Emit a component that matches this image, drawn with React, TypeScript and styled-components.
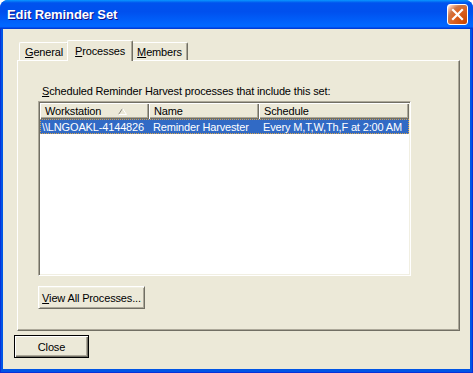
import styled, { createGlobalStyle } from 'styled-components';

const GlobalStyle = createGlobalStyle`
  html, body {
    margin: 0;
    padding: 0;
    background: #ffffff;
  }
  body {
    font-family: "Liberation Sans", Arial, sans-serif;
    font-size: 11px;
    letter-spacing: -0.15px;
    color: #000;
  }
  * {
    box-sizing: border-box;
  }
`;

const Window = styled.div`
  width: 473px;
  height: 373px;
  display: flex;
  flex-direction: column;
  background: #0054e3;
  border-radius: 8px 8px 0 0;
  overflow: hidden;
`;

const TitleBar = styled.div`
  height: 29px;
  flex-shrink: 0;
  display: flex;
  align-items: center;
  justify-content: space-between;
  padding: 0 5px 0 7px;
  background: linear-gradient(
    180deg,
    #0997ff 0%,
    #0053ee 10%,
    #0050ee 40%,
    #0066ff 86%,
    #0066ff 92%,
    #005bff 94%,
    #003dd7 96%,
    #003dd7 100%
  );
`;

const Title = styled.span`
  font-family: "Liberation Sans", Arial, sans-serif;
  font-weight: bold;
  font-size: 13px;
  color: #fff;
  text-shadow: 1px 1px 0 #0f1089;
  letter-spacing: -0.1px;
`;

const CloseBox = styled.div`
  width: 21px;
  height: 21px;
  border: 1px solid #fff;
  border-radius: 3px;
  display: flex;
  align-items: center;
  justify-content: center;
  background: radial-gradient(
    circle at 90% 90%,
    #cc4600 0%,
    #dc6527 55%,
    #cd7546 70%,
    #ffccb2 90%,
    #ffffff 100%
  );
`;

const Frame = styled.div`
  flex: 1;
  display: flex;
  padding: 0 3px 4px 3px;
  background: #0055e5;
  box-shadow: inset 1px 0 0 #0831d9, inset -1px 0 0 #0831d9, inset 0 -1px 0 #0831d9;
`;

const Client = styled.div`
  flex: 1;
  display: flex;
  flex-direction: column;
  background: #ece9d8;
  padding: 11px 0 11px 0;
`;

const TabControl = styled.div`
  margin-left: 14px;
  width: 443px;
  flex: 1;
  display: flex;
  flex-direction: column;
`;

const TabStrip = styled.div`
  height: 20px;
  display: flex;
  align-items: flex-end;
  padding-left: 2px;
  position: relative;
  z-index: 1;
`;

const Tab = styled.div<{ $active?: boolean }>`
  position: relative;
  z-index: ${p => (p.$active ? 2 : 1)};
  height: ${p => (p.$active ? 21 : 18)}px;
  margin: 0 ${p => (p.$active ? -2 : 0)}px ${p => (p.$active ? -1 : 0)}px;
  padding: 0 ${p => (p.$active ? 7 : 5)}px ${p => (p.$active ? 1 : 0)}px;
  display: flex;
  align-items: center;
  background: #ece9d8;
  border-top: 1px solid #fff;
  border-left: 1px solid #fff;
  border-right: 1px solid #716f64;
  box-shadow: inset -1px 0 0 #aca899;
  border-radius: 2px 2px 0 0;
  white-space: nowrap;
`;

const Panel = styled.div`
  flex: 1;
  display: flex;
  flex-direction: column;
  align-items: flex-start;
  background: #ece9d8;
  border-top: 1px solid #fff;
  border-left: 1px solid #fff;
  border-right: 1px solid #716f64;
  border-bottom: 1px solid #716f64;
  box-shadow: inset -1px -1px 0 #aca899;
  padding: 24px 0 0 20px;
`;

const Label = styled.div`
  height: 13px;
  line-height: 13px;
  padding-left: 4px;
  margin-bottom: 3px;
  white-space: nowrap;
`;

const ListView = styled.div`
  width: 373px;
  height: 175px;
  background: #fff;
  border: 1px solid;
  border-color: #aca899 #fff #fff #aca899;
  box-shadow: inset 1px 1px 0 #716f64, inset -1px -1px 0 #f1efe2;
  padding: 1px;
`;

const HeaderRow = styled.div`
  display: grid;
  grid-template-columns: 109px 110px 150px;
  height: 16px;
`;

const HeaderCell = styled.div`
  display: flex;
  align-items: center;
  padding-left: 5px;
  background: #ece9d8;
  box-shadow: inset 1px 1px 0 #fff, inset -1px -1px 0 #716f64, inset -2px -2px 0 #aca899;
  white-space: nowrap;
`;

const SortArrow = styled.svg`
  margin-left: auto;
  margin-right: 22px;
  display: block;
`;

const DataRow = styled.div<{ $selected?: boolean }>`
  display: grid;
  grid-template-columns: 109px 110px 150px;
  height: 15px;
  background: ${p => (p.$selected ? '#316ac5' : 'transparent')};
  color: ${p => (p.$selected ? '#fff' : '#000')};
  border: 1px dotted ${p => (p.$selected ? '#d8a24a' : 'transparent')};
`;

const DataCell = styled.div<{ $first?: boolean }>`
  display: flex;
  align-items: center;
  padding-left: ${p => (p.$first ? 1 : 3)}px;
  white-space: nowrap;
  overflow: hidden;
`;

const Button = styled.button<{ $default?: boolean; $width: number }>`
  width: ${p => p.$width}px;
  height: 23px;
  padding: 0;
  font-family: "Liberation Sans", Arial, sans-serif;
  font-size: 11px;
  letter-spacing: -0.15px;
  color: #000;
  background: #ece9d8;
  border: 1px solid;
  border-color: ${p => (p.$default ? '#000' : '#fff #716f64 #716f64 #fff')};
  box-shadow: ${p =>
    p.$default
      ? 'inset 1px 1px 0 #fff, inset -1px -1px 0 #716f64, inset -2px -2px 0 #aca899'
      : 'inset 1px 1px 0 #f1efe2, inset -1px -1px 0 #aca899'};
  border-radius: 0;
`;

const PanelButton = styled(Button)`
  margin-top: 10px;
`;

const Footer = styled.div`
  margin-top: 4px;
  padding-left: 11px;
  display: flex;
`;

export default function App() {
  return (
    <>
      <GlobalStyle />
      <Window>
        <TitleBar>
          <Title>Edit Reminder Set</Title>
          <CloseBox>
            <svg width="13" height="13" viewBox="0 0 13 13">
              <path d="M2 2 L11 11 M11 2 L2 11" stroke="#fff" strokeWidth="2.2" strokeLinecap="square" />
            </svg>
          </CloseBox>
        </TitleBar>
        <Frame>
          <Client>
            <TabControl>
              <TabStrip>
                <Tab>
                  <u>G</u>eneral
                </Tab>
                <Tab $active>
                  <u>P</u>rocesses
                </Tab>
                <Tab>
                  <u>M</u>embers
                </Tab>
              </TabStrip>
              <Panel>
                <Label>
                  <u>S</u>cheduled Reminder Harvest processes that include this set:
                </Label>
                <ListView>
                  <HeaderRow>
                    <HeaderCell>
                      Workstation
                      <SortArrow width="9" height="7" viewBox="0 0 9 7">
                        <path d="M0.5 6.5 L4.5 0.5" stroke="#8c8a7e" fill="none" />
                        <path d="M4.5 0.5 L8.5 6.5 L0.5 6.5" stroke="#fff" fill="none" />
                      </SortArrow>
                    </HeaderCell>
                    <HeaderCell>Name</HeaderCell>
                    <HeaderCell>Schedule</HeaderCell>
                  </HeaderRow>
                  <DataRow $selected>
                    <DataCell $first>\\LNGOAKL-4144826</DataCell>
                    <DataCell>Reminder Harvester</DataCell>
                    <DataCell>Every M,T,W,Th,F at 2:00 AM</DataCell>
                  </DataRow>
                </ListView>
                <PanelButton $width={107}>
                  <u>V</u>iew All Processes...
                </PanelButton>
              </Panel>
            </TabControl>
            <Footer>
              <Button $default $width={75}>
                Close
              </Button>
            </Footer>
          </Client>
        </Frame>
      </Window>
    </>
  );
}
